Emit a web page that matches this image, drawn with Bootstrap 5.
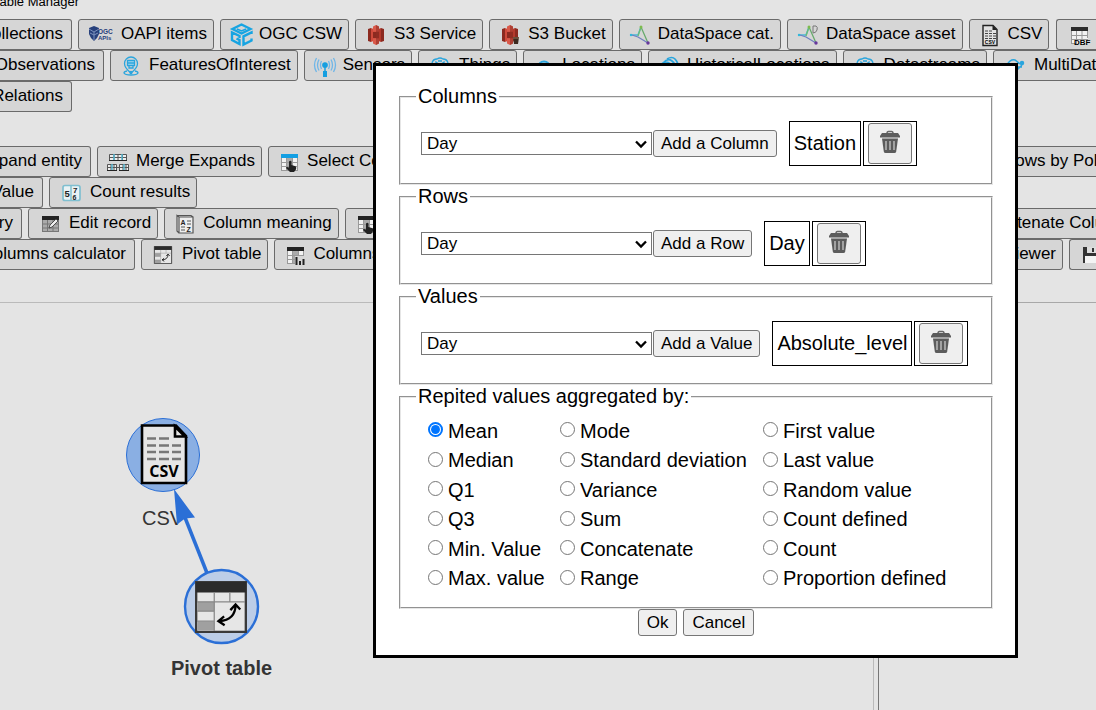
<!DOCTYPE html>
<html lang="en">
<head>
<meta charset="utf-8">
<meta name="viewport" content="width=device-width, initial-scale=1">
<title>Table Manager</title>
<link href="https://cdn.jsdelivr.net/npm/bootstrap@5.3.0/dist/css/bootstrap.min.css" rel="stylesheet">
<style>
  body { background: #e4e4e4; color: #000; font: 20px/23px "Liberation Sans", Arial, sans-serif; }
  .app-title { width: 79px; height: 9px; font-size: 13px; line-height: 15px; }
  .sources { margin-top: 10px; }
  .operations { margin: 34px 0 32px; }
  .tool-row { height: 31px; gap: 6px; }
  .ctl {
    --bs-btn-color: #000; --bs-btn-hover-color: #000; --bs-btn-bg: #efefef; --bs-btn-hover-bg: #e3e3e3;
    --bs-btn-border-color: #767676; --bs-btn-hover-border-color: #555; --bs-btn-border-radius: 3px;
    --bs-btn-font-size: 17px; --bs-btn-line-height: 21px; --bs-btn-padding-y: 2px; --bs-btn-padding-x: 7px;
    flex: none; white-space: nowrap;
  }
  .tool {
    --bs-btn-bg: #d6d6d6; --bs-btn-border-color: #6a6a6a; --bs-btn-padding-y: 0px;
    display: flex; align-items: center; gap: 5px; height: 31px; padding-right: 6px;
  }
  .tool span { padding-bottom: 2px; }
  .tool svg { flex: none; }
  .cut-left { justify-content: flex-end; overflow: hidden; border-left: 0; border-radius: 0 3px 3px 0; padding-left: 0; padding-right: 8px; }
  .cut-right { justify-content: flex-start; overflow: hidden; border-right: 0; border-radius: 3px 0 0 3px; padding-right: 0; margin-left: auto; }
  .w-a { width: 72px; } .w-b { width: 104px; } .w-c { width: 91px; } .w-d { width: 43px; }
  .w-e { width: 22px; } .w-f { width: 135px; } .w-g { width: 184px; } .w-h { width: 167px; } .w-i { width: 27px; } .w-j { width: 40px; }
  .graph-pane { border: solid #bababa; border-width: 1px 1px 0 0; }
  .side-pane { width: 218px; border: solid #767676; border-width: 1px 0 0 1px; border-top-color: #a8a8a8; }
  .dialog-box { top: 63px; right: 78px; width: 645px; border: 3px solid #000; background: #fff; padding: 19px 22px 19px 23px; }
  .group { border: 2px groove #e6e6e6; padding: 7px 15px 11px; }
  .group legend { float: none; width: auto; margin: 0; padding: 0 2px; font-size: 20px; line-height: 23px; }
  .picker { height: 57px; padding: 0 5px; gap: 1px; }
  .field-select {
    width: 231px; height: 23px; padding: 0 20px 0 5px; border: 1px solid #767676; border-radius: 0; color: #000;
    font-size: 17px; line-height: 20px; background-position: right 3px center; background-size: 14px 10px;
    background-image: url("data:image/svg+xml,%3Csvg xmlns='http://www.w3.org/2000/svg' viewBox='0 0 14 10'%3E%3Cpath d='M2 2.5l5 5 5-5' fill='none' stroke='%23000' stroke-width='2.3'/%3E%3C/svg%3E");
  }
  .chosen { gap: 2px; margin-left: 11px; }
  .cell { height: 45px; border: 1px solid #000; padding: 0 4px; }
  .bin { width: 44px; height: 41px; padding: 0 0 4px; }
  .group-choices { padding: 0 15px 14px; }
  .choices { grid-template-columns: 132px 203px auto; grid-auto-rows: 30px 29px; padding: 8px 12px 0; }
  .choices label { display: flex; align-items: center; gap: 5px; }
  .choices .form-check-input { width: 15px; height: 15px; margin: 0 0 3px; border: 1px solid #767676; flex: none; }
  .choices .form-check-input:checked { background-color: #fff; border: 2px solid #0075ff; background-size: 13px 13px;
    background-image: url("data:image/svg+xml,%3Csvg xmlns='http://www.w3.org/2000/svg' viewBox='0 0 19 19'%3E%3Ccircle cx='9.5' cy='9.5' r='6.5' fill='%230075ff'/%3E%3C/svg%3E"); }
  .answers { gap: 6px; }
  .answers .ctl { --bs-btn-padding-x: 8px; }
</style>
</head>
<body class="overflow-hidden">

<svg class="d-none" aria-hidden="true">
  <symbol id="i-oapi" viewBox="0 0 30 26">
    <path d="M3 6l5-2 5 2v6l-2 4-3 3-3-3-2-4z" fill="#27407c"/><path d="M3 7l5 3 5-3M8 10v8M4 11l4 2 4-2" stroke="#7b90bd" stroke-width="1" fill="none"/>
    <text x="12" y="12" font-size="6.5" font-weight="bold" fill="#27407c">OGC</text><text x="12" y="18" font-size="6" font-weight="bold" fill="#27407c">APIs</text>
  </symbol>
  <symbol id="i-ogc" viewBox="0 0 26 26" fill="none">
    <g stroke="#16a4e2" stroke-width="2.400"><path d="M13.500 2.500l9 4.500-9 4.500-9-4.500z"/><path d="M9 7l4.500 2L18 7" stroke-width="1.500"/>
    <path d="M11.500 16v-2l-7.500-3.500V18l7.500 4v-4l-3-1.500M23.500 12v-1.500l-8 3.800v8.200l8-4v-2"/></g>
  </symbol>
  <symbol id="i-s3" viewBox="0 0 26 26">
    <path d="M5 7l3-1v14l-3-1zM21 7l-3-1v14l3-1z" fill="#8c2a20"/><path d="M8 6l5 2v10l-5 2z" fill="#cf4a3b"/><path d="M18 6l-5 2v10l5 2z" fill="#b43a2d"/>
    <path d="M13 3l3 1.500v5h-6v-5zM13 23l3-1.500v-5h-6v5z" fill="#d9594a"/><path d="M10 10h6v6h-6z" fill="#8c2a20"/><path d="M13 3l3 1.500v17L13 23z" fill="#922e24" opacity=".6"/>
  </symbol>
  <symbol id="i-bucket" viewBox="0 0 26 26"><use href="#i-s3" width="26" height="26"/><path d="M16 15h6l-1 7h-4z" fill="#3d2a20"/><path d="M16 16h6" stroke="#94765a"/></symbol>
  <symbol id="i-ds" viewBox="0 0 26 26" fill="none">
    <path d="M14 5L11 13 4 13" stroke="#49b8d8" stroke-width="1.500"/><path d="M14 5l7 16" stroke="#66a96b" stroke-width="1.300"/><path d="M5 13l6 2 10 6" stroke="#6f7fc0" stroke-width="1.300"/><path d="M14 5l-3 9" stroke="#6dbb73" stroke-width="1.300"/>
    <circle cx="14" cy="5" r="1.500" fill="#7dbb4d"/><circle cx="21" cy="21" r="1.700" fill="#67379c"/><circle cx="4" cy="13" r="1.200" fill="#31b7db"/>
  </symbol>
  <symbol id="i-dsa" viewBox="0 0 26 26" fill="none"><use href="#i-ds" width="26" height="26"/><path d="M18 11V4h3q2 1 1 4-1 3-4 3" stroke="#777"/></symbol>
  <symbol id="i-csv" viewBox="0 0 26 26">
    <path d="M6 3.500h10l4 4v16H6z" fill="#e2e2e2" stroke="#222" stroke-width="1.400"/><path d="M15.500 3v5H20z" fill="#222"/>
    <path d="M8 9h3m1 0h3M8 11.500h3m1 0h3m1 0h3M8 14h3m1 0h3m1 0h3M8 16.500h3m1 0h3m1 0h3" stroke="#444"/>
    <text x="13" y="22" font-size="5" font-weight="bold" text-anchor="middle">CSV</text>
  </symbol>
  <symbol id="i-dbf" viewBox="0 0 26 26">
    <path d="M5 5h17v17H5z" fill="#f2f2f2"/><path d="M5 5h17v4H5z" fill="#2b2b2b"/><path d="M5.500 9v13M10.500 9v13M16 9v10M21.500 9v7M5 13.500h17M5 17.500h17M5 21.500h5" stroke="#999"/>
    <text x="8" y="23" font-size="8" font-weight="bold">DBF</text>
  </symbol>
  <symbol id="i-foi" viewBox="0 0 26 26" fill="none" stroke="#2aa5dd" stroke-width="1.300">
    <path d="M13 20Q6.500 15 6.500 10.500a6.500 6.500 0 0 1 13 0Q19.500 15 13 20z"/><path d="M9.500 7.500h7v5h-7zM9.500 10h7" fill="#a9d8ee"/><path d="M11 13v2h4v-2M9 18q-3 .5-3 2 1 2 7 2t7-2q0-1.500-3-2"/><circle cx="13" cy="19.500" r="1" fill="#2aa5dd"/>
  </symbol>
  <symbol id="i-sensor" viewBox="0 0 26 26" fill="none" stroke="#6fb6e8" stroke-width="1.300">
    <circle cx="13" cy="12" r="2.200" fill="#169fe0" stroke="#169fe0"/><path d="M13 14v5" stroke="#169fe0" stroke-width="1.500"/><path d="M11 18h4v6h-4z" fill="#169fe0" stroke="none"/>
    <path d="M9.500 8q-2 4 0 8M7 6.500q-3 5.500 0 11M4.500 5q-4 7 0 14M16.500 8q2 4 0 8M19 6.500q3 5.500 0 11M21.500 5q4 7 0 14"/>
  </symbol>
  <symbol id="i-thing" viewBox="0 0 26 26" fill="none" stroke="#2aa5dd" stroke-width="1.300">
    <path d="M6 15q-3-2-1-5 1-4 5-4 3-2 6 0 4 0 5 4 2 3-1 5-1 5-7 5t-7-5z"/><path d="M9 14V9l4 3 4-3v5M11 8h4"/>
  </symbol>
  <symbol id="i-loc" viewBox="0 0 26 26" fill="none" stroke="#2aa5dd" stroke-width="1.800"><path d="M13 24Q7 18 7 14.500a6 6 0 0 1 12 0Q19 18 13 24z"/><circle cx="13" cy="14.500" r="2"/></symbol>
  <symbol id="i-hist" viewBox="0 0 26 26" fill="none" stroke="#2aa5dd" stroke-width="1.700"><path d="M10 24Q4 18 4 15a6 6 0 0 1 12 0Q16 18 10 24zM8 9q4-4 8-1t3 7M11 6q5-3 8 0t3 7"/></symbol>
  <symbol id="i-multi" viewBox="0 0 26 26" fill="none" stroke="#2aa5dd" stroke-width="1.500"><path d="M5 12q3-6 8-5l4 3M12 14h8M15 10l5 1M14 18l6-6M11 21l4-5"/><circle cx="20" cy="10" r="1.500" fill="#2aa5dd"/><circle cx="12" cy="20" r="1.500" fill="#2aa5dd"/></symbol>
  <symbol id="i-merge" viewBox="0 0 26 26" fill="#eee" stroke="#555">
    <path d="M4.500 5.500h17v6h-17zM4.500 8.500h17M9 5v6M13 5v6M17.500 5v6"/><path d="M2.500 15.500h9v6h-9zM14.500 15.500h9v6h-9zM2 18.500h22M6 15v7M9 15v7M18 15v7M21 15v7"/><path d="M9 5v6M17 5v6M7 15v6M19 15v6" stroke="#55b5ce" stroke-width="1.500"/><path d="M4 11.500h18M2 21.500h10M14 21.500h10" stroke="#222"/>
  </symbol>
  <symbol id="i-grid" viewBox="0 0 26 26">
    <path d="M5 5h17v17H5z" fill="#f2f2f2"/><path d="M11 9h5v13h-5z" fill="#aaa"/><path d="M5.500 9v13M10.500 9v13M16.500 9v13M21.500 9v13M5 13.500h17M5 17.500h17M5 21.500h17" stroke="#999" fill="none"/><path d="M5 5h17v4H5z" fill="currentColor"/>
  </symbol>
  <symbol id="i-hand" viewBox="0 0 26 26"><path d="M13 12.500q1.500-1.500 2.500 0V16l4 1.200q1.500 1 0 4L18 23h-4l-4-4q0-1.500 3-.5z" fill="#222"/></symbol>
  <symbol id="i-select" viewBox="0 0 26 26"><use href="#i-grid" width="26" height="26"/><use href="#i-hand" width="26" height="26"/></symbol>
  <symbol id="i-count" viewBox="0 0 26 26">
    <rect x="5" y="5.500" width="17" height="15" rx="2" fill="#e9f2f4" stroke="#7fbfd0" stroke-width="1.700"/><path d="M13 5v16" stroke="#7fbfd0" stroke-width="1.500"/>
    <text x="6.500" y="17" font-size="9.500" font-weight="bold" fill="#222">5</text><text x="15" y="12.500" font-size="8" font-weight="bold" fill="#222">7</text><text x="14.500" y="20" font-size="7" font-weight="bold" fill="#222">6</text>
  </symbol>
  <symbol id="i-edit" viewBox="0 0 26 26">
    <path d="M5 5h17v16H5z" fill="#aaa"/><path d="M5 5h17v4H5z" fill="#222"/><path d="M5.500 9v12M10.500 9v12M16 9v12M21.500 9v12M5 13h17M5 17h17M5 20.500h17" stroke="#777"/><path d="M12 17l1-3 6-6 2 2-6 6z" fill="#eee" stroke="#333" stroke-width=".8"/>
  </symbol>
  <symbol id="i-mean" viewBox="0 0 26 26" fill="none" stroke="#555" stroke-width="1.200">
    <path d="M7 6h14v16H7zM7 6L5 4.500V20l2 2M5 4.500h14L21 6" fill="#eee"/><path d="M15 10h4M15 13h4M9 16h4M9 19h4" /><text x="8.500" y="14" font-size="7" font-weight="bold" fill="#222" stroke="none">A</text><text x="14.500" y="21" font-size="7" font-weight="bold" fill="#222" stroke="none">Z</text>
  </symbol>
  <symbol id="i-pivot" viewBox="0 0 50 50">
    <path d="M1 1h48v48H1z" fill="#e6e6e6" stroke="#3a3a3a" stroke-width="2.500"/><path d="M1 1h48v10H1z" fill="#2b2b2b"/><path d="M2.500 20h16v9h-16zM2.500 39h16v8.500h-16z" fill="#a0a0a0"/><path d="M2 20h46M2 29h16M2 38.500h16M18.500 11v37M33.500 11v9" stroke="#888" stroke-width="1.200"/>
    <path d="M23.500 38.500q15-1 15.500-15M28 34l-5.500 4.500 6 4M34 28l5-5.500 4.500 5" fill="none" stroke="#000" stroke-width="2.200"/>
  </symbol>
  <symbol id="i-stat" viewBox="0 0 26 26"><use href="#i-grid" width="26" height="26"/><path d="M13 14h10v9H13z" fill="#d6d6d6"/><path d="M14.500 15v8M18 19v4M21.500 17v6" stroke="#222" stroke-width="2"/></symbol>
  <symbol id="i-save" viewBox="0 0 26 26"><path d="M6 5h16l2 2v14H6z" fill="#333"/><path d="M10 5h9v6h-9z" fill="#ddd"/><path d="M15 6h2v4h-2z" fill="#333"/><path d="M8 14h14v7H8z" fill="#f4f4f4"/></symbol>
  <symbol id="i-bin" viewBox="0 0 22 24">
    <path d="M8 3.500q0-2 1.500-2h3q1.500 0 1.500 2" fill="none" stroke="#666" stroke-width="1.500"/><path d="M3 3h16l2 3v1.500H1V6z" fill="#5c5c5c"/><path d="M3 8.500h16l-1.800 13q-.3 1.500-1.700 1.500h-9q-1.400 0-1.700-1.500z" fill="#5c5c5c"/><path d="M7 11v9M11 11v9M15 11v9" stroke="#b5b5b5" stroke-width="1.600"/>
  </symbol>
</svg>

<div class="d-flex flex-column vh-100 overflow-hidden">
  <header class="app-title d-flex flex-shrink-0 justify-content-end align-items-end text-nowrap overflow-hidden">Table Manager</header>

  <nav class="sources overflow-hidden flex-shrink-0" aria-label="Data sources">
    <div class="tool-row d-flex">
      <button type="button" class="btn ctl tool cut-left w-a"><span>Collections</span></button>
      <button type="button" class="btn ctl tool"><svg width="30" height="26"><use href="#i-oapi"/></svg><span>OAPI items</span></button>
      <button type="button" class="btn ctl tool"><svg width="26" height="26"><use href="#i-ogc"/></svg><span>OGC CSW</span></button>
      <button type="button" class="btn ctl tool"><svg width="26" height="26"><use href="#i-s3"/></svg><span>S3 Service</span></button>
      <button type="button" class="btn ctl tool"><svg width="26" height="26"><use href="#i-bucket"/></svg><span>S3 Bucket</span></button>
      <button type="button" class="btn ctl tool"><svg width="26" height="26"><use href="#i-ds"/></svg><span>DataSpace cat.</span></button>
      <button type="button" class="btn ctl tool"><svg width="26" height="26"><use href="#i-dsa"/></svg><span>DataSpace asset</span></button>
      <button type="button" class="btn ctl tool"><svg width="26" height="26"><use href="#i-csv"/></svg><span>CSV</span></button>
      <button type="button" class="btn ctl tool cut-right w-j" aria-label="DBF"><svg width="30" height="26"><use href="#i-dbf"/></svg></button>
    </div>
    <div class="tool-row d-flex">
      <button type="button" class="btn ctl tool cut-left w-b"><span>Observations</span></button>
      <button type="button" class="btn ctl tool"><svg width="26" height="26"><use href="#i-foi"/></svg><span>FeaturesOfInterest</span></button>
      <button type="button" class="btn ctl tool"><svg width="26" height="26"><use href="#i-sensor"/></svg><span>Sensors</span></button>
      <button type="button" class="btn ctl tool"><svg width="28" height="26"><use href="#i-thing"/></svg><span>Things</span></button>
      <button type="button" class="btn ctl tool"><svg width="26" height="26"><use href="#i-loc"/></svg><span>Locations</span></button>
      <button type="button" class="btn ctl tool"><svg width="26" height="26"><use href="#i-hist"/></svg><span>HistoricalLocations</span></button>
      <button type="button" class="btn ctl tool"><svg width="28" height="26"><use href="#i-thing"/></svg><span>Datastreams</span></button>
      <button type="button" class="btn ctl tool"><svg width="28" height="26"><use href="#i-multi"/></svg><span>MultiDatastreams</span></button>
    </div>
    <div class="tool-row d-flex">
      <button type="button" class="btn ctl tool cut-left w-a"><span>Relations</span></button>
    </div>
  </nav>

  <nav class="operations overflow-hidden flex-shrink-0" aria-label="Table operations">
    <div class="tool-row d-flex">
      <button type="button" class="btn ctl tool cut-left w-c"><span>Expand entity</span></button>
      <button type="button" class="btn ctl tool"><svg width="26" height="26"><use href="#i-merge"/></svg><span>Merge Expands</span></button>
      <button type="button" class="btn ctl tool"><svg width="26" height="26" color="#149fe3"><use href="#i-select"/></svg><span>Select Columns</span></button>
      <button type="button" class="btn ctl tool cut-right w-g"><svg width="26" height="26"><use href="#i-select"/></svg><span>Select Rows by Polygon</span></button>
    </div>
    <div class="tool-row d-flex">
      <button type="button" class="btn ctl tool cut-left w-d"><span>Value</span></button>
      <button type="button" class="btn ctl tool"><svg width="28" height="26"><use href="#i-count"/></svg><span>Count results</span></button>
    </div>
    <div class="tool-row d-flex">
      <button type="button" class="btn ctl tool cut-left w-e"><span>Query</span></button>
      <button type="button" class="btn ctl tool"><svg width="28" height="26"><use href="#i-edit"/></svg><span>Edit record</span></button>
      <button type="button" class="btn ctl tool"><svg width="26" height="26"><use href="#i-mean"/></svg><span>Column meaning</span></button>
      <button type="button" class="btn ctl tool"><svg width="26" height="26" color="#222"><use href="#i-select"/></svg><span>Select Columns</span></button>
      <button type="button" class="btn ctl tool cut-right w-h"><svg width="26" height="26"><use href="#i-grid"/></svg><span>Concatenate Columns</span></button>
    </div>
    <div class="tool-row d-flex">
      <button type="button" class="btn ctl tool cut-left w-f"><span>Columns calculator</span></button>
      <button type="button" class="btn ctl tool"><svg width="28" height="18"><use href="#i-pivot"/></svg><span>Pivot table</span></button>
      <button type="button" class="btn ctl tool"><svg width="26" height="26" color="#222"><use href="#i-stat"/></svg><span>Columns statistics</span></button>
      <button type="button" class="btn ctl tool ms-auto"><svg width="26" height="26"><use href="#i-grid"/></svg><span>Viewer</span></button>
      <button type="button" class="btn ctl tool cut-right w-i ms-0" aria-label="Save"><svg width="26" height="26"><use href="#i-save"/></svg></button>
    </div>
  </nav>

  <main class="d-flex flex-grow-1">
    <section class="graph-pane flex-grow-1 overflow-hidden" aria-label="Query graph">
      <svg class="d-block" width="400" height="407" viewBox="0 303 400 407" font-size="20" fill="#343434">
        <circle cx="163" cy="455" r="36.500" fill="#8aafe3" stroke="#2b6fd6"/>
        <path d="M142 425.500h34l10 10.500v47h-44z" fill="#e6e6e6" stroke="#000" stroke-width="2.600"/>
        <path d="M175 426.500v10h10z" fill="#e6e6e6" stroke="#000" stroke-width="2.600"/>
        <path d="M147 438.500h9m3 0h10M147 445.500h9m3 0h10m3 0h9M147 452h9m3 0h10m3 0h9M147 459h9m3 0h10m3 0h9" stroke="#777" stroke-width="2.600"/>
        <text x="164" y="477" font-family="Open Sans" font-size="16" font-weight="bold" fill="#000" text-anchor="middle">CSV</text>
        <text x="162.500" y="525" text-anchor="middle">CSV</text>
        <path d="M207 573L184 515" stroke="#2b6fd6" stroke-width="3.500"/>
        <path d="M174 489L195 517.500 185 518.500 177 524.500z" fill="#2b6fd6"/>
        <circle cx="221.500" cy="606.500" r="36.500" fill="#bccde7" stroke="#2b6fd6" stroke-width="2.400"/>
        <use href="#i-pivot" x="195" y="581" width="52" height="52"/>
        <text x="221.500" y="675" text-anchor="middle" font-weight="bold">Pivot table</text>
      </svg>
    </section>
    <section class="side-pane flex-shrink-0 ms-1" aria-label="Details"></section>
  </main>
</div>

<div class="dialog-box position-absolute" role="dialog" aria-label="Pivot table options">
  <form>
    <fieldset class="group">
      <legend>Columns</legend>
      <div class="picker d-flex align-items-center">
        <select class="form-select field-select" aria-label="Column field"><option>Day</option><option>Station</option></select>
        <button type="button" class="btn ctl">Add a Column</button>
        <div class="chosen d-flex">
          <div class="cell d-flex align-items-center">Station</div>
          <div class="cell d-flex align-items-center"><button type="button" class="btn ctl bin" aria-label="Remove Station"><svg width="22" height="24"><use href="#i-bin"/></svg></button></div>
        </div>
      </div>
    </fieldset>
    <fieldset class="group">
      <legend>Rows</legend>
      <div class="picker d-flex align-items-center">
        <select class="form-select field-select" aria-label="Row field"><option>Day</option><option>Station</option></select>
        <button type="button" class="btn ctl">Add a Row</button>
        <div class="chosen d-flex">
          <div class="cell d-flex align-items-center">Day</div>
          <div class="cell d-flex align-items-center"><button type="button" class="btn ctl bin" aria-label="Remove Day"><svg width="22" height="24"><use href="#i-bin"/></svg></button></div>
        </div>
      </div>
    </fieldset>
    <fieldset class="group">
      <legend>Values</legend>
      <div class="picker d-flex align-items-center">
        <select class="form-select field-select" aria-label="Value field"><option>Day</option><option>Station</option></select>
        <button type="button" class="btn ctl">Add a Value</button>
        <div class="chosen d-flex">
          <div class="cell d-flex align-items-center">Absolute_level</div>
          <div class="cell d-flex align-items-center"><button type="button" class="btn ctl bin" aria-label="Remove Absolute_level"><svg width="22" height="24"><use href="#i-bin"/></svg></button></div>
        </div>
      </div>
    </fieldset>
    <fieldset class="group group-choices">
      <legend>Repited values aggregated by:</legend>
      <div class="choices d-grid">
        <label><input class="form-check-input" type="radio" name="agg" checked>Mean</label>
        <label><input class="form-check-input" type="radio" name="agg">Mode</label>
        <label><input class="form-check-input" type="radio" name="agg">First value</label>
        <label><input class="form-check-input" type="radio" name="agg">Median</label>
        <label><input class="form-check-input" type="radio" name="agg">Standard deviation</label>
        <label><input class="form-check-input" type="radio" name="agg">Last value</label>
        <label><input class="form-check-input" type="radio" name="agg">Q1</label>
        <label><input class="form-check-input" type="radio" name="agg">Variance</label>
        <label><input class="form-check-input" type="radio" name="agg">Random value</label>
        <label><input class="form-check-input" type="radio" name="agg">Q3</label>
        <label><input class="form-check-input" type="radio" name="agg">Sum</label>
        <label><input class="form-check-input" type="radio" name="agg">Count defined</label>
        <label><input class="form-check-input" type="radio" name="agg">Min. Value</label>
        <label><input class="form-check-input" type="radio" name="agg">Concatenate</label>
        <label><input class="form-check-input" type="radio" name="agg">Count</label>
        <label><input class="form-check-input" type="radio" name="agg">Max. value</label>
        <label><input class="form-check-input" type="radio" name="agg">Range</label>
        <label><input class="form-check-input" type="radio" name="agg">Proportion defined</label>
      </div>
    </fieldset>
    <div class="answers d-flex justify-content-center">
      <button type="button" class="btn ctl">Ok</button>
      <button type="button" class="btn ctl">Cancel</button>
    </div>
  </form>
</div>

<script src="https://cdn.jsdelivr.net/npm/bootstrap@5.3.0/dist/js/bootstrap.bundle.min.js"></script>
</body>
</html>
